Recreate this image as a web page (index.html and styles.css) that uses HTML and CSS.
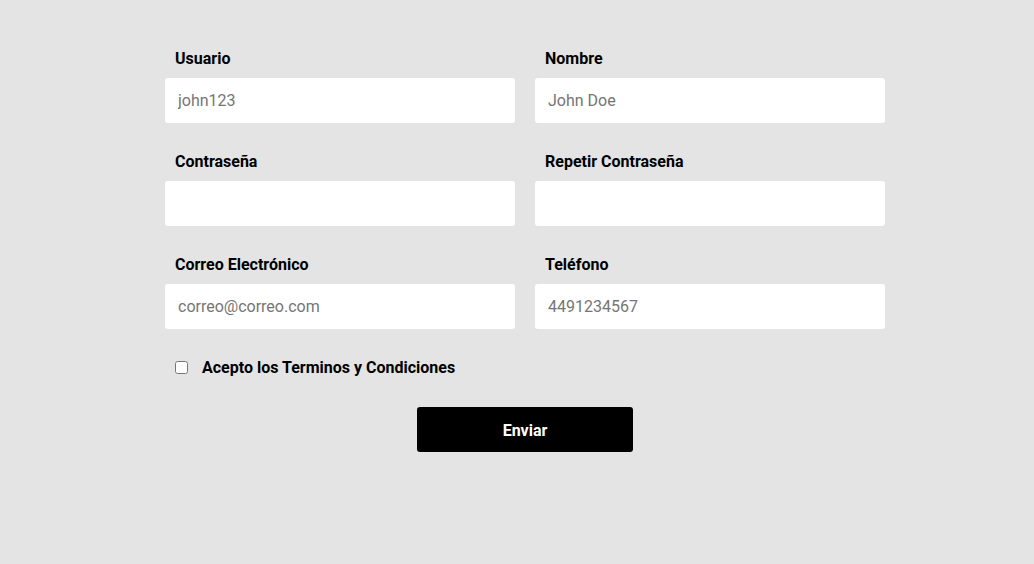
FILE: index.html
```html
<!DOCTYPE html>
<html lang="es">
<head>
<meta charset="utf-8">
<link rel="stylesheet" href="styles.css">
</head>
<body>
<form class="form">
  <div class="grid">
    <div class="field">
      <label class="label">Usuario</label>
      <input class="input" type="text" placeholder="john123">
    </div>
    <div class="field">
      <label class="label">Nombre</label>
      <input class="input" type="text" placeholder="John Doe">
    </div>
    <div class="field">
      <label class="label">Contraseña</label>
      <input class="input" type="password">
    </div>
    <div class="field">
      <label class="label">Repetir Contraseña</label>
      <input class="input" type="password">
    </div>
    <div class="field">
      <label class="label">Correo Electrónico</label>
      <input class="input" type="email" placeholder="correo@correo.com">
    </div>
    <div class="field">
      <label class="label">Teléfono</label>
      <input class="input" type="tel" placeholder="4491234567">
    </div>
  </div>
  <label class="terms"><input type="checkbox" class="check"><span>Acepto los Terminos y Condiciones</span></label>
  <div class="actions"><button type="button" class="btn">Enviar</button></div>
</form>
</body>
</html>
```

FILE: styles.css
```css
html, body {
  margin: 0;
  background: #e4e4e4;
  font-family: Roboto, "Liberation Sans", sans-serif;
}
body {
  padding-left: 16px;
  padding-top: 49px;
}
.form {
  width: 720px;
  margin: 0 auto;
}
.grid {
  display: grid;
  grid-template-columns: 350px 350px;
  column-gap: 20px;
  row-gap: 29px;
}
.field {
  display: flex;
  flex-direction: column;
}
.label {
  font-size: 16px;
  font-weight: 700;
  line-height: 19px;
  color: #000;
  padding-left: 10px;
  margin-bottom: 10px;
}
.input {
  box-sizing: border-box;
  height: 45px;
  border: none;
  border-radius: 3px;
  background: #fff;
  padding: 0 13px;
  font-family: Roboto, "Liberation Sans", sans-serif;
  font-size: 16px;
  color: #000;
  outline: none;
}
.input::placeholder {
  color: #757575;
}
.terms {
  display: flex;
  align-items: center;
  margin-top: 28px;
  padding-left: 10px;
  height: 20px;
  font-size: 16px;
  font-weight: 700;
  color: #000;
}
.check {
  width: 13px;
  height: 13px;
  margin: 0 14px 0 0;
}
.actions {
  display: flex;
  justify-content: center;
  margin-top: 30px;
}
.btn {
  width: 216px;
  height: 45px;
  padding-top: 2px;
  background: #000;
  color: #fff;
  border: none;
  border-radius: 3px;
  font-family: Roboto, "Liberation Sans", sans-serif;
  font-size: 16px;
  font-weight: 700;
}
```
